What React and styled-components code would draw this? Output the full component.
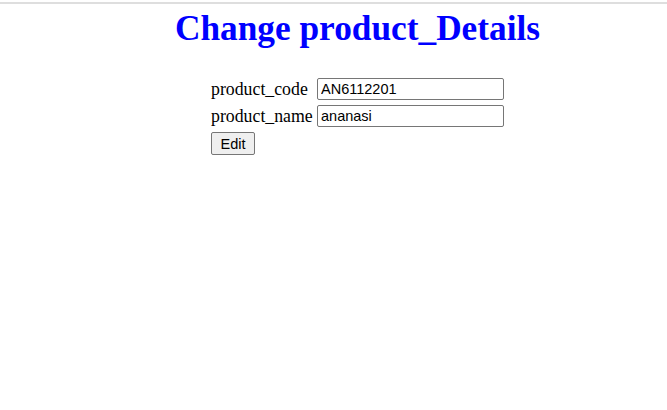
import React, { useState } from 'react';
import styled, { createGlobalStyle } from 'styled-components';

const GlobalStyle = createGlobalStyle`
    body{
        margin:0;
        background:#fff;
        font-family:"Liberation Serif", "Times New Roman", serif;
    }
`

const Page = styled.div`
    border-top:2px solid rgb(222, 222, 222);
    margin-top:2px;
    padding-left:48px;
`

const Title = styled.h1`
    margin:5px 0 0;
    text-align:center;
    color:rgb(0, 0, 255);
    font-size:35.3px;
    font-weight:bold;
    line-height:40px;
`

const FormGrid = styled.form`
    width:293px;
    margin:29px auto 0;
    display:grid;
    grid-template-columns:106px 187px;
    row-gap:5px;
    align-items:center;
    font-size:17.8px;
    color:#000;
    label{
        white-space:nowrap;
        line-height:22px;
    }
`

const TextInput = styled.input`
    box-sizing:border-box;
    width:187px;
    height:22px;
    padding:1px 3px;
    border:1px solid rgb(118, 118, 118);
    border-radius:2px;
    font-family:"Liberation Sans", Arial, sans-serif;
    font-size:14.5px;
    color:#000;
    outline:none;
`

const EditButton = styled.button`
    grid-column:1 / 2;
    justify-self:start;
    width:44px;
    height:23px;
    padding:0;
    background:rgb(239, 239, 239);
    border:1px solid rgb(118, 118, 118);
    border-radius:2px;
    font-family:"Liberation Sans", Arial, sans-serif;
    font-size:14.5px;
    color:#000;
`

const App = () => {
    const [code, setCode] = useState('AN6112201');
    const [name, setName] = useState('ananasi');

    return (
        <Page>
            <GlobalStyle />
            <Title>Change product_Details</Title>
            <FormGrid onSubmit={e => e.preventDefault()}>
                <label>product_code</label>
                <TextInput value={code} onChange={e => setCode(e.target.value)} />
                <label>product_name</label>
                <TextInput value={name} onChange={e => setName(e.target.value)} />
                <EditButton type="submit">Edit</EditButton>
            </FormGrid>
        </Page>
    )
}

export default App;
